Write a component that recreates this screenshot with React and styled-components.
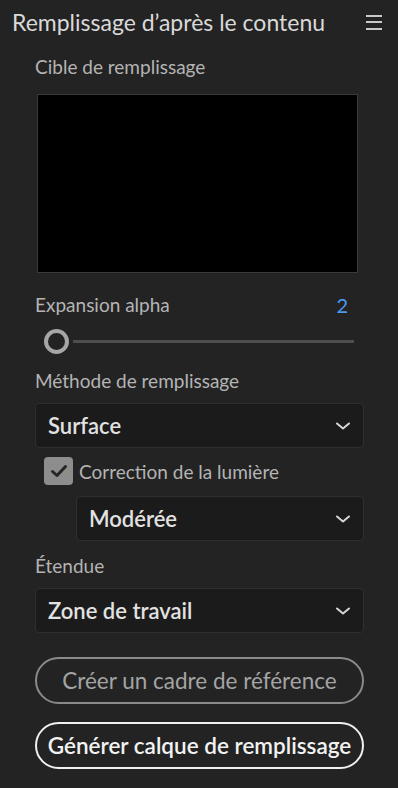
import React, { useState } from 'react';
import styled, { createGlobalStyle } from 'styled-components';

const GlobalStyle = createGlobalStyle`
  html, body {
    margin: 0;
    padding: 0;
    background: #232323;
  }
  body {
    font-family: Lato, "Open Sans", sans-serif;
  }
`;

const Panel = styled.div`
  width: 398px;
  height: 788px;
  background: #232323;
  color: #b8b8b8;
  box-sizing: border-box;
  overflow: hidden;
`;

const Header = styled.header`
  display: flex;
  justify-content: space-between;
  align-items: center;
  height: 44px;
  padding: 0 16px 0 12px;
`;

const Title = styled.h1`
  margin: 0;
  font-size: 23px;
  font-weight: 400;
  color: #d9d9d9;
`;

const MenuIcon = styled.div`
  display: flex;
  flex-direction: column;
  gap: 4.5px;
  span {
    display: block;
    width: 16px;
    height: 2px;
    background: #c8c8c8;
  }
`;

const Body = styled.div`
  display: flex;
  flex-direction: column;
  padding: 0 34px 0 35px;
`;

const Label = styled.div`
  font-size: 19px;
  color: #b4b4b4;
  height: 24px;
  line-height: 24px;
  margin-top: ${p => p.$top || 0}px;
  display: flex;
  justify-content: space-between;
`;

const Value = styled.span`
  color: #4b9cf0;
  font-size: 20px;
  margin-right: 16px;
`;

const Preview = styled.div`
  height: 177px;
  margin: 15px 6px 0 2px;
  background: #000;
  border: 1px solid #3a3a3a;
`;

const SliderRow = styled.div`
  display: flex;
  align-items: center;
  height: 26px;
  margin: 11px 10px 0 9px;
`;

const Thumb = styled.div`
  width: 17px;
  height: 17px;
  border: 4px solid #a6a6a6;
  border-radius: 50%;
  flex: none;
`;

const Track = styled.div`
  flex: 1;
  height: 3px;
  background: #4d4d4d;
  margin-left: 4px;
`;

const Select = styled.div`
  display: flex;
  align-items: center;
  justify-content: space-between;
  height: 43px;
  margin-top: ${p => p.$top || 0}px;
  margin-left: ${p => p.$indent || 0}px;
  padding: 0 12px 0 12px;
  background: #1b1b1b;
  border: 1px solid #2f2f2f;
  border-radius: 4px;
  font-size: 22px;
  font-weight: 600;
  color: #e2e2e2;
`;

const CheckRow = styled.label`
  display: flex;
  align-items: center;
  gap: 6px;
  height: 28px;
  margin: 9px 0 0 9px;
  font-size: 19px;
  color: #b4b4b4;
`;

const Box = styled.span`
  width: 29px;
  height: 28px;
  border-radius: 4px;
  background: #8d8d8d;
  display: flex;
  align-items: center;
  justify-content: center;
`;

const Pill = styled.button`
  height: 47px;
  margin-top: ${p => p.$top || 0}px;
  border-radius: 24px;
  background: transparent;
  font-family: inherit;
  border: 2px solid ${p => (p.$primary ? '#f0f0f0' : '#8a8a8a')};
  color: ${p => (p.$primary ? '#f2f2f2' : '#a4a4a4')};
  font-size: ${p => (p.$primary ? 22.5 : 22.5)}px;
  font-weight: ${p => (p.$primary ? 600 : 400)};
  padding: 0;
`;

function Chevron() {
  return (
    <svg width="16" height="10" viewBox="0 0 16 10">
      <path d="M2 2.5 L8 7.5 L14 2.5" fill="none" stroke="#d6d6d6" strokeWidth="2" strokeLinecap="round" strokeLinejoin="round" />
    </svg>
  );
}

function Check() {
  return (
    <svg width="18" height="14" viewBox="0 0 18 14">
      <path d="M2.5 7.5 L7 11.5 L15.5 2.5" fill="none" stroke="#262626" strokeWidth="3" strokeLinecap="round" strokeLinejoin="round" />
    </svg>
  );
}

function App() {
  const [checked] = useState(true);

  return (
    <Panel>
      <GlobalStyle />
      <Header>
        <Title>Remplissage d’après le contenu</Title>
        <MenuIcon>
          <span /><span /><span />
        </MenuIcon>
      </Header>
      <Body>
        <Label $top={11}>Cible de remplissage</Label>
        <Preview />
        <Label $top={20}>
          Expansion alpha
          <Value>2</Value>
        </Label>
        <SliderRow>
          <Thumb />
          <Track />
        </SliderRow>
        <Label $top={15}>Méthode de remplissage</Label>
        <Select $top={10}>
          Surface
          <Chevron />
        </Select>
        <CheckRow>
          <Box>{checked && <Check />}</Box>
          Correction de la lumière
        </CheckRow>
        <Select $top={11} $indent={41}>
          Modérée
          <Chevron />
        </Select>
        <Label $top={13}>Étendue</Label>
        <Select $top={10}>
          Zone de travail
          <Chevron />
        </Select>
        <Pill $top={24}>Créer un cadre de référence</Pill>
        <Pill $top={18} $primary>Générer calque de remplissage</Pill>
      </Body>
    </Panel>
  );
}

export default App;
